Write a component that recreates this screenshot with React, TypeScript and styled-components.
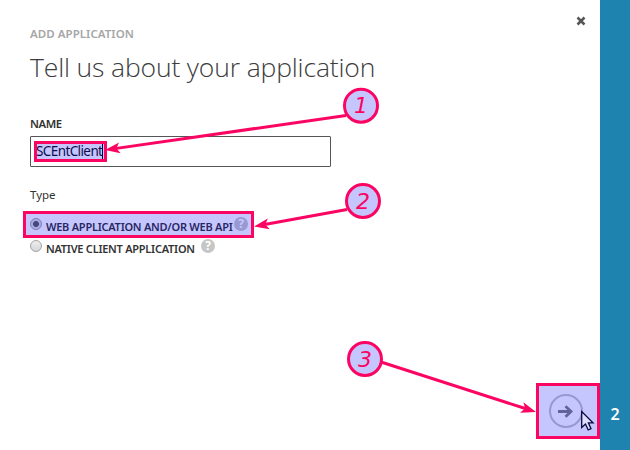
import React from "react";
import styled, { createGlobalStyle } from "styled-components";

const PINK = "#fb0563";
const TINT = "rgba(0, 0, 255, 0.225)";

const GlobalStyle = createGlobalStyle`
  * { box-sizing: border-box; }
  body { margin: 0; background: #fff; overflow: hidden; }
`;

const Wizard = styled.div`
  position: relative;
  display: flex;
  width: 630px;
  height: 450px;
  background: #fff;
  color: #333;
  font-family: "Noto Sans", "Open Sans", sans-serif;
`;

const Page = styled.main`
  position: relative;
  flex: 1;
  padding: 26px 30px 0;
`;

const StepRail = styled.aside`
  width: 30px;
  padding-top: 403px;
  background: #1f83b0;
  color: #fff;
  font-size: 16px;
  font-weight: 600;
  line-height: 22px;
  text-align: center;
`;

const CloseButton = styled.button`
  position: absolute;
  top: 15px;
  right: 13px;
  width: 12px;
  height: 12px;
  padding: 0;
  border: 0;
  background: none;
  svg { display: block; }
`;

const Eyebrow = styled.div`
  height: 16px;
  color: #a6a6a6;
  font-size: 11.5px;
  font-weight: 600;
  letter-spacing: 0.05px;
  line-height: 16px;
  white-space: nowrap;
`;

const Title = styled.h1`
  height: 40px;
  margin: 6px 0 0;
  color: #3c3c3c;
  font-family: "Open Sans", sans-serif;
  font-size: 26.5px;
  font-weight: 300;
  letter-spacing: -0.15px;
  line-height: 39px;
  white-space: nowrap;
`;

const FieldLabel = styled.label`
  display: block;
  height: 16px;
  margin-top: 28px;
  font-size: 11.3px;
  font-weight: 600;
  letter-spacing: -0.4px;
  line-height: 16px;
`;

const NameField = styled.div`
  display: flex;
  align-items: center;
  width: 300.5px;
  height: 31px;
  margin-top: 4px;
  padding: 0 0 1px 5px;
  border: 1.5px solid #555;
  border-radius: 1px;
  color: #111;
  font-size: 13.5px;
  letter-spacing: -0.6px;
`;

const NameValue = styled.span`
  position: relative;
  border-right: 1px solid #000;
  line-height: 17px;
  white-space: nowrap;
`;

const GroupLabel = styled.div`
  height: 16px;
  margin-top: 20px;
  font-size: 11.5px;
  line-height: 16px;
`;

const Options = styled.div`
  display: grid;
  grid-template-rows: 22px 22px;
  margin-top: 11px;
`;

const Option = styled.label`
  display: flex;
  align-items: center;
  position: relative;
  font-size: 11px;
  font-weight: 600;
  white-space: nowrap;
`;

const Radio = styled.span<{ $on?: boolean }>`
  width: 12px;
  height: 12px;
  margin: 0 4px 3px 0;
  border: 1px solid #a3a3a3;
  border-radius: 50%;
  background: ${(p) =>
    p.$on
      ? "radial-gradient(circle, #5c5c5c 0 2.6px, #ddd 3.4px)"
      : "linear-gradient(#eee, #d6d6d6)"};
`;

const OptionText = styled.span<{ $width: number }>`
  width: ${(p) => p.$width}px;
  margin-top: 2px;
  letter-spacing: -0.25px;
`;

const Help = styled.span`
  display: grid;
  place-items: center;
  width: 14px;
  height: 14px;
  margin-bottom: 3px;
  border-radius: 50%;
  background: #c6c6c6;
  color: #fff;
  font-size: 12px;
  font-weight: 700;
  line-height: 14px;
`;

const NextButton = styled.button`
  position: absolute;
  left: 548px;
  top: 394px;
  width: 36px;
  height: 36px;
  padding: 0;
  border: 0;
  background: none;
  svg { display: block; }
`;

const Highlight = styled.div<{ $x: number; $y: number; $w: number; $h: number }>`
  position: absolute;
  left: ${(p) => p.$x}px;
  top: ${(p) => p.$y}px;
  width: ${(p) => p.$w}px;
  height: ${(p) => p.$h}px;
  border: 3px solid ${PINK};
  background: ${TINT};
`;

const Annotations = styled.svg`
  position: absolute;
  inset: 0;
  pointer-events: none;
  text {
    font: italic 22px "DejaVu Sans", sans-serif;
    fill: ${PINK};
    text-anchor: middle;
  }
`;

interface CalloutProps {
  n: number;
  cx: number;
  cy: number;
  from: [number, number];
  to: [number, number];
}

function Callout({ n, cx, cy, from, to }: CalloutProps) {
  const angle = (Math.atan2(to[1] - from[1], to[0] - from[0]) * 180) / Math.PI;
  const length = Math.hypot(to[0] - from[0], to[1] - from[1]);
  return (
    <g>
      <g transform={`translate(${to[0]} ${to[1]}) rotate(${angle})`} fill={PINK}>
        <path d={`M${-length} 0H-8`} stroke={PINK} strokeWidth="3" />
        <path d="M0 0L-15 -5.5L-11.5 0L-15 5.5Z" />
      </g>
      <circle cx={cx} cy={cy} r="16.5" fill="#c6c6ff" stroke={PINK} strokeWidth="3" />
      <text x={cx} y={cy + 7.5}>{n}</text>
    </g>
  );
}

export default function App() {
  return (
    <>
      <GlobalStyle />
      <Wizard>
        <Page>
          <Eyebrow>ADD APPLICATION</Eyebrow>
          <Title>Tell us about your application</Title>
          <FieldLabel>NAME</FieldLabel>
          <NameField>
            <NameValue>SCEntClient</NameValue>
          </NameField>
          <GroupLabel>Type</GroupLabel>
          <Options>
            <Option>
              <Radio $on />
              <OptionText $width={188}>WEB APPLICATION AND/OR WEB API</OptionText>
              <Help>?</Help>
            </Option>
            <Option>
              <Radio />
              <OptionText $width={155}>NATIVE CLIENT APPLICATION</OptionText>
              <Help>?</Help>
            </Option>
          </Options>
          <CloseButton aria-label="Close">
            <svg width="12" height="12" viewBox="0 0 12 12">
              <path d="M2.5 2.5L9.5 9.5M9.5 2.5L2.5 9.5" stroke="#555" strokeWidth="2.5" />
            </svg>
          </CloseButton>
          <NextButton aria-label="Next">
            <svg width="36" height="36" viewBox="0 0 36 36" fill="none">
              <circle cx="18" cy="17" r="16" stroke="#c4c4c4" strokeWidth="2" />
              <path d="M10 17.5H23M17.5 12.3L23 17.5L17.5 22.7" stroke="#808080" strokeWidth="2.8" />
            </svg>
          </NextButton>
        </Page>
        <StepRail>2</StepRail>
        <Highlight $x={34} $y={141} $w={73} $h={21} />
        <Highlight $x={23} $y={211} $w={231} $h={27} />
        <Highlight $x={536} $y={383} $w={64} $h={56} />
        <Annotations width="630" height="450" viewBox="0 0 630 450">
          <Callout n={1} cx={361} cy={105.7} from={[346, 115.5]} to={[105, 150]} />
          <Callout n={2} cx={363} cy={201} from={[347, 209.5]} to={[254, 226.5]} />
          <Callout n={3} cx={365} cy={359} from={[381, 362]} to={[536, 412]} />
          <path
            d="M581.7 411.5V427.5L585.5 424L588.2 430L591 428.7L588.4 422.8H593Z"
            fill="#dedeff"
            stroke="#08083c"
            strokeWidth="1.3"
          />
        </Annotations>
      </Wizard>
    </>
  );
}
